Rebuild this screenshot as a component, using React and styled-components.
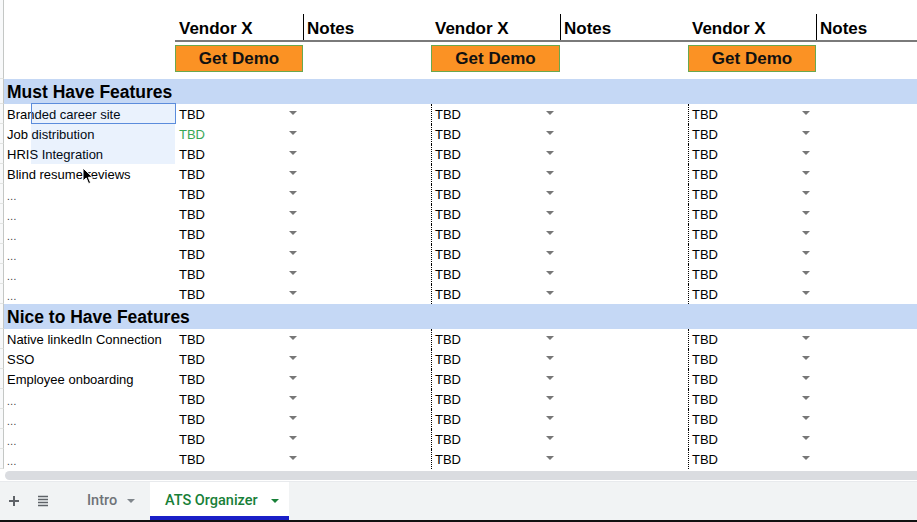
import React from "react";
import styled, { createGlobalStyle } from "styled-components";

const COLS = "4px 171px 128px 128px 129px 128px 128px 1fr";

const mustHave = [
  "Branded career site",
  "Job distribution",
  "HRIS Integration",
  "Blind resume reviews",
  "...",
  "...",
  "...",
  "...",
  "...",
  "...",
];

const niceToHave = [
  "Native linkedIn Connection",
  "SSO",
  "Employee onboarding",
  "...",
  "...",
  "...",
  "...",
];

function Dropdown({ green }) {
  return (
    <Chip>
      <ChipText $green={green}>TBD</ChipText>
      <Caret />
    </Chip>
  );
}

function DataRow({ label, greenFirst }) {
  return (
    <Row $h={20}>
      <Stub />
      <Cell>{label === "..." ? <Dots>...</Dots> : label}</Cell>
      <Cell $pad={4}>
        <Dropdown green={greenFirst} />
      </Cell>
      <Cell />
      <Cell $dotted>
        <Dropdown />
      </Cell>
      <Cell />
      <Cell $dotted>
        <Dropdown />
      </Cell>
      <Cell />
    </Row>
  );
}

function Section({ title, items, greenIndex }) {
  return (
    <>
      <Row $h={25}>
        <Stub />
        <SectionTitle>{title}</SectionTitle>
      </Row>
      {items.map((label, i) => (
        <DataRow key={i} label={label} greenFirst={i === greenIndex} />
      ))}
    </>
  );
}

export default function App() {
  return (
    <>
      <GlobalStyle />
      <Page>
        <Sheet>
          <Row $h={40}>
            <Stub />
            <Cell />
            <VendorHead>Vendor X</VendorHead>
            <NotesHead>
              <span>Notes</span>
            </NotesHead>
            <VendorHead>Vendor X</VendorHead>
            <NotesHead>
              <span>Notes</span>
            </NotesHead>
            <VendorHead>Vendor X</VendorHead>
            <NotesHead>
              <span>Notes</span>
            </NotesHead>
          </Row>
          <Row $h={39}>
            <Stub />
            <Cell />
            <DemoCell>
              <DemoButton>Get Demo</DemoButton>
            </DemoCell>
            <Cell />
            <DemoCell>
              <DemoButton>Get Demo</DemoButton>
            </DemoCell>
            <Cell />
            <DemoCell>
              <DemoButton>Get Demo</DemoButton>
            </DemoCell>
            <Cell />
          </Row>
          <Section title="Must Have Features" items={mustHave} greenIndex={1} />
          <Section title="Nice to Have Features" items={niceToHave} />

          <Selection />
          <ActiveCell />
          <Pointer width="12" height="18" viewBox="0 0 12 18">
            <path
              d="M1 1 L1 14 L4.2 11 L6.6 16.6 L8.6 15.7 L6.3 10.3 L10.6 10.3 Z"
              fill="#000"
              stroke="#fff"
              strokeWidth="1"
              strokeLinejoin="round"
            />
          </Pointer>
        </Sheet>

        <ScrollTrack>
          <ScrollThumb />
        </ScrollTrack>

        <TabBar>
          <BarIcon>
            <svg width="12" height="12" viewBox="0 0 12 12">
              <path d="M6 1v10M1 6h10" stroke="#5f6368" strokeWidth="2" />
            </svg>
          </BarIcon>
          <BarIcon>
            <svg width="12" height="12" viewBox="0 0 12 12">
              <path
                d="M1 1.5h10M1 4.5h10M1 7.5h10M1 10.5h10"
                stroke="#5f6368"
                strokeWidth="1.6"
              />
            </svg>
          </BarIcon>
          <Tab>
            Intro
            <TabCaret />
          </Tab>
          <Tab $active>
            ATS Organizer
            <TabCaret $active />
          </Tab>
        </TabBar>
      </Page>
    </>
  );
}

const GlobalStyle = createGlobalStyle`
  html, body {
    margin: 0;
    padding: 0;
    background: #fff;
    overflow: hidden;
  }
  body {
    font-family: "Liberation Sans", Arial, sans-serif;
    color: #000;
  }
  * {
    box-sizing: border-box;
  }
`;

const Page = styled.div`
  width: 917px;
  height: 522px;
  display: flex;
  flex-direction: column;
  border-bottom: 2px solid #111;
  overflow: hidden;
`;

const Sheet = styled.div`
  position: relative;
  flex: none;
  height: 469px;
`;

const Row = styled.div`
  display: grid;
  grid-template-columns: ${COLS};
  height: ${(p) => p.$h}px;
`;

const Stub = styled.div`
  background: #f8f9fa;
  border-right: 1px solid #c4c7c5;
  border-bottom: 1px solid #e1e3e1;
`;

const Cell = styled.div`
  display: flex;
  align-items: center;
  min-width: 0;
  padding-left: ${(p) => (p.$pad != null ? p.$pad : 3)}px;
  font-size: 13px;
  white-space: nowrap;
  border-left: ${(p) => (p.$dotted ? "1px dotted #000" : "none")};
`;

const Dots = styled.span`
  font-size: 10px;
  letter-spacing: 0.5px;
  padding-top: 4px;
  color: #333;
`;

const VendorHead = styled.div`
  padding: 19px 0 0 4px;
  line-height: 20px;
  font-size: 17px;
  font-weight: bold;
  white-space: nowrap;
  border-bottom: 2px solid #7a7a7a;
`;

const NotesHead = styled.div`
  padding-top: 14px;
  border-bottom: 2px solid #7a7a7a;
  font-size: 17px;
  font-weight: bold;

  span {
    display: block;
    height: 26px;
    padding: 5px 0 0 3px;
    line-height: 20px;
    border-left: 1.5px solid #000;
  }
`;

const DemoCell = styled.div`
  padding-top: 5px;
`;

const DemoButton = styled.div`
  height: 27px;
  display: flex;
  align-items: center;
  justify-content: center;
  padding-top: 1px;
  background: #fb9224;
  border: 1px solid #6aa84f;
  font-size: 17px;
  font-weight: bold;
  color: #111;
`;

const SectionTitle = styled.div`
  grid-column: 2 / -1;
  display: flex;
  align-items: center;
  padding: 2px 0 0 3px;
  background: #c5d8f5;
  font-size: 17.5px;
  font-weight: bold;
`;

const Chip = styled.div`
  flex: 1;
  display: flex;
  align-items: center;
  justify-content: space-between;
  padding-right: 6px;
`;

const ChipText = styled.span`
  color: ${(p) => (p.$green ? "#3aa757" : "#000")};
`;

const Caret = styled.span`
  width: 0;
  height: 0;
  border-left: 4px solid transparent;
  border-right: 4px solid transparent;
  border-top: 4px solid #777;
  margin-top: -2px;
`;

const Selection = styled.div`
  position: absolute;
  left: 31px;
  top: 104px;
  width: 144px;
  height: 60px;
  background: rgba(26, 115, 232, 0.09);
  pointer-events: none;
`;

const ActiveCell = styled.div`
  position: absolute;
  left: 31px;
  top: 103px;
  width: 145px;
  height: 21px;
  border: 1px solid #5b8cdc;
  pointer-events: none;
`;

const Pointer = styled.svg`
  position: absolute;
  left: 82px;
  top: 167px;
`;

const ScrollTrack = styled.div`
  height: 12px;
  padding: 2px 0 1px 5px;
  background: #fff;
`;

const ScrollThumb = styled.div`
  height: 9px;
  background: #dadce0;
  border-radius: 5px 0 0 5px;
`;

const TabBar = styled.div`
  flex: 1;
  display: flex;
  align-items: stretch;
  background: #f1f3f4;
  border-top: 1px solid #e8eaed;
  padding-left: 7px;
`;

const BarIcon = styled.div`
  width: 29px;
  display: flex;
  align-items: center;
  padding-left: 1px;
`;

const Tab = styled.div`
  display: flex;
  align-items: center;
  gap: ${(p) => (p.$active ? "13px" : "10px")};
  margin-left: ${(p) => (p.$active ? "2px" : "7px")};
  padding: 3px ${(p) => (p.$active ? "14px" : "14px")} 0 ${(p) => (p.$active ? "15px" : "15px")};
  width: ${(p) => (p.$active ? "139px" : "76px")};
  white-space: nowrap;
  font-family: Roboto, "Liberation Sans", Arial, sans-serif;
  font-size: 14.5px;
  font-weight: 500;
  color: ${(p) => (p.$active ? "#188038" : "#6f7378")};
  background: ${(p) => (p.$active ? "#fff" : "transparent")};
  border-bottom: 4px solid ${(p) => (p.$active ? "#1a1fc8" : "transparent")};
`;

const TabCaret = styled.span`
  width: 0;
  height: 0;
  border-left: 4.5px solid transparent;
  border-right: 4.5px solid transparent;
  border-top: 4.5px solid ${(p) => (p.$active ? "#188038" : "#80868b")};
`;
